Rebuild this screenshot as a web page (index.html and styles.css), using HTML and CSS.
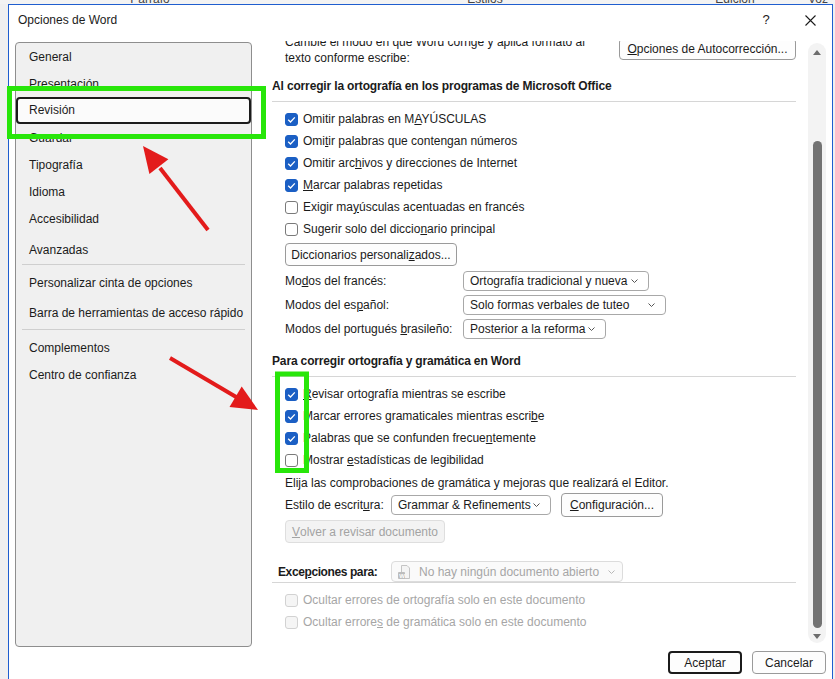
FILE: index.html
```html
<!DOCTYPE html>
<html lang="es">
<head>
    <meta charset="UTF-8">
    <title>Opciones de Word</title>
    <link rel="stylesheet" href="styles.css">
</head>
<body>
    <!-- Word ribbon behind the dialog, only its bottom edge shows -->
    <div id="ribbon">
        <span class="rb-group rb-fuente"></span>
        <span class="rb-group rb-parrafo">Párrafo</span>
        <span class="rb-group rb-estilos">Estilos</span>
        <span class="rb-group rb-edicion">Edición</span>
        <span class="rb-group rb-voz">Voz</span>
    </div>

    <div id="dialog">
        <div id="title-bar">
            <span class="title">Opciones de Word</span>
            <div class="title-buttons">
                <span class="help">?</span>
                <svg class="close" width="11" height="11" viewBox="0 0 11 11">
                    <path d="M0.5 0.5 L10.5 10.5 M10.5 0.5 L0.5 10.5" stroke="#1b1b1b" stroke-width="1.1" fill="none"/>
                </svg>
            </div>
        </div>

        <div id="main">
            <ul id="nav">
                <li>General</li>
                <li>Presentación</li>
                <li class="selected">Revisión</li>
                <li>Guardar</li>
                <li>Tipografía</li>
                <li>Idioma</li>
                <li>Accesibilidad</li>
                <li class="group-start">Avanzadas</li>
                <li class="nav-sep"></li>
                <li class="after-sep">Personalizar cinta de opciones</li>
                <li class="spaced">Barra de herramientas de acceso rápido</li>
                <li class="nav-sep sep-low"></li>
                <li class="after-sep">Complementos</li>
                <li>Centro de confianza</li>
            </ul>

            <div id="pane">
                <div class="pane-content">
                    <div class="intro">
                        <p>Cambie el modo en que Word corrige y aplica formato al<br>texto conforme escribe:</p>
                        <button class="btn btn-autocorrect"><u>O</u>pciones de Autocorrección...</button>
                    </div>

                    <h2 class="section-title">Al corregir la ortografía en los programas de Microsoft Office</h2>
                    <div class="check-list">
                        <div class="check"><span class="box on"><svg viewBox="0 0 13 13"><path d="M3.2 6.8 L5.5 9 L9.8 4.4"/></svg></span><span>Omitir palabras en M<u>A</u>YÚSCULAS</span></div>
                        <div class="check"><span class="box on"><svg viewBox="0 0 13 13"><path d="M3.2 6.8 L5.5 9 L9.8 4.4"/></svg></span><span>Omi<u>t</u>ir palabras que contengan números</span></div>
                        <div class="check"><span class="box on"><svg viewBox="0 0 13 13"><path d="M3.2 6.8 L5.5 9 L9.8 4.4"/></svg></span><span>Omitir arc<u>h</u>ivos y direcciones de Internet</span></div>
                        <div class="check"><span class="box on"><svg viewBox="0 0 13 13"><path d="M3.2 6.8 L5.5 9 L9.8 4.4"/></svg></span><span><u>M</u>arcar palabras repetidas</span></div>
                        <div class="check"><span class="box"></span><span>Exigir ma<u>y</u>úsculas acentuadas en francés</span></div>
                        <div class="check"><span class="box"></span><span>Sugerir solo del diccio<u>n</u>ario principal</span></div>
                    </div>
                    <button class="btn btn-dict">Diccionarios personali<u>z</u>ados...</button>

                    <div class="modes">
                        <div class="mode-row">
                            <span class="mode-label">Mo<u>d</u>os del francés:</span>
                            <div class="dropdown dd-fr"><span>Ortografía tradicional y nueva</span><svg class="chev" width="7" height="4" viewBox="0 0 7 4"><path d="M0.5 0.5 L3.5 3.5 L6.5 0.5"/></svg></div>
                        </div>
                        <div class="mode-row">
                            <span class="mode-label">Modos del es<u>p</u>añol:</span>
                            <div class="dropdown dd-es"><span>Solo formas verbales de tuteo</span><svg class="chev" width="7" height="4" viewBox="0 0 7 4"><path d="M0.5 0.5 L3.5 3.5 L6.5 0.5"/></svg></div>
                        </div>
                        <div class="mode-row">
                            <span class="mode-label">Modos del portugués <u>b</u>rasileño:</span>
                            <div class="dropdown dd-pt"><span>Posterior a la reforma</span><svg class="chev" width="7" height="4" viewBox="0 0 7 4"><path d="M0.5 0.5 L3.5 3.5 L6.5 0.5"/></svg></div>
                        </div>
                    </div>

                    <h2 class="section-title second">Para corregir ortografía y gramática en Word</h2>
                    <div class="check-list">
                        <div class="check"><span class="box on"><svg viewBox="0 0 13 13"><path d="M3.2 6.8 L5.5 9 L9.8 4.4"/></svg></span><span><u>R</u>evisar ortografía mientras se escribe</span></div>
                        <div class="check"><span class="box on"><svg viewBox="0 0 13 13"><path d="M3.2 6.8 L5.5 9 L9.8 4.4"/></svg></span><span>Marcar errores gramaticales mientras escri<u>b</u>e</span></div>
                        <div class="check"><span class="box on"><svg viewBox="0 0 13 13"><path d="M3.2 6.8 L5.5 9 L9.8 4.4"/></svg></span><span>Palabras que se confunden frecue<u>n</u>temente</span></div>
                        <div class="check"><span class="box"></span><span>Mostrar <u>e</u>stadísticas de legibilidad</span></div>
                    </div>
                    <p class="note">Elija las comprobaciones de gramática y mejoras que realizará el Editor.</p>
                    <div class="style-row">
                        <span class="style-label">Estilo de escrit<u>u</u>ra:</span>
                        <div class="dropdown dd-style"><span>Grammar &amp; Refinements</span><svg class="chev" width="7" height="4" viewBox="0 0 7 4"><path d="M0.5 0.5 L3.5 3.5 L6.5 0.5"/></svg></div>
                        <button class="btn btn-config"><u>C</u>onfiguración...</button>
                    </div>
                    <button class="btn btn-recheck" disabled><u>V</u>olver a revisar documento</button>

                    <div class="exceptions">
                        <span class="exc-label">Exce<u>p</u>ciones para:</span>
                        <div class="dropdown dd-doc disabled">
                            <svg class="doc-icon" width="12" height="14" viewBox="0 0 12 14">
                                <path d="M3.5 0.5 H9 L11.5 3 V13.5 H3.5 Z" fill="#f4f4f4" stroke="#c4c4c4"/>
                                <rect x="0" y="7" width="7" height="7" rx="1" fill="#bdbdbd"/>
                                <text x="1.2" y="12.6" font-size="6" font-family="Liberation Sans" font-weight="bold" fill="#fff">W</text>
                            </svg>
                            <span>No hay ningún documento abierto</span>
                            <svg class="chev" width="7" height="4" viewBox="0 0 7 4"><path d="M0.5 0.5 L3.5 3.5 L6.5 0.5"/></svg>
                        </div>
                    </div>
                    <div class="check-list disabled-list">
                        <div class="check"><span class="box"></span><span>Ocultar errores de ortografía solo en este documento</span></div>
                        <div class="check"><span class="box"></span><span>Ocultar errore<u>s</u> de gramática solo en este documento</span></div>
                    </div>
                </div>
            </div>

            <div id="scrollbar">
                <span class="sb-up"></span>
                <span class="sb-thumb"></span>
                <span class="sb-down"></span>
            </div>
        </div>

        <div id="footer">
            <button class="btn btn-ok">Aceptar</button>
            <button class="btn btn-cancel">Cancelar</button>
        </div>
    </div>

    <!-- Annotations drawn on top of the screenshot -->
    <svg id="marks" width="835" height="679" viewBox="0 0 835 679">
        <rect x="9.5" y="88.5" width="254" height="48" fill="none" stroke="#28e60a" stroke-width="5"/>
        <rect x="277.5" y="374" width="29" height="96.5" fill="none" stroke="#28e60a" stroke-width="5"/>
        <line x1="208" y1="230" x2="160" y2="168" stroke="#e31b1b" stroke-width="4"/>
        <polygon points="143,146 168.4,159.3 149.4,173.9" fill="#e31b1b"/>
        <line x1="170" y1="358" x2="237" y2="397.5" stroke="#e31b1b" stroke-width="4"/>
        <polygon points="258,410 229.5,407.1 241.7,386.5" fill="#e31b1b"/>
    </svg>
</body>
</html>
```
FILE: styles.css
```css
/* Base */
* { margin: 0; padding: 0; box-sizing: border-box; }
body {
    width: 835px;
    height: 679px;
    overflow: hidden;
    position: relative;
    background-color: #f0f0f0;
    color: #1b1b1b;
    font-family: "Liberation Sans", Arial, sans-serif;
    font-size: 12px;
    line-height: 16px;
}
u { text-decoration: underline; text-underline-offset: 1px; }

/* Ribbon strip behind the dialog */
#ribbon { display: flex; height: 4px; overflow: hidden; background-color: #f3f3f3; color: #444; }
.rb-group { flex: none; margin-top: -9px; line-height: 16px; text-align: center; }
.rb-fuente { width: 12px; }
.rb-parrafo { width: 276px; }
.rb-estilos { width: 394px; }
.rb-edicion { width: 106px; }
.rb-voz { width: 60px; }

/* Dialog frame */
#dialog {
    width: 825px;
    height: 700px;
    margin-left: 8px;
    border: 1px solid #1f5ecf;
    border-bottom: none;
    background-color: #fff;
}
#title-bar { display: flex; justify-content: space-between; height: 36px; padding: 7px 16px 0 9px; }
.title-buttons { display: flex; align-items: flex-start; }
.help { width: 16px; text-align: center; font-size: 13px; }
.close { margin: 3px 0 0 31px; }

#main { display: flex; height: 606px; padding-left: 6px; }

/* Left navigation */
#nav {
    flex: none;
    width: 237px;
    height: 605px;
    margin-top: 1px;
    list-style: none;
    border: 1px solid #8e8e8e;
    border-radius: 4px;
    background-color: #f0f0f0;
}
#nav li { height: 27px; line-height: 28px; padding-left: 13px; white-space: nowrap; }
#nav li.selected { border: 2px solid #1b1b1b; border-radius: 4px; background-color: #fbfbfb; line-height: 23px; padding-left: 11px; }
#nav li.group-start { margin-top: 4px; }
#nav li.nav-sep { height: 1px; margin: 1px 6px 0 6px; padding: 0; background-color: #cfcfcf; }
#nav li.sep-low { margin-top: 3px; }
#nav li.after-sep { margin-top: 4px; }
#nav li.spaced { margin-top: 3px; }

/* Right pane (scrolled) */
#pane { flex: none; width: 524px; height: 604px; margin-left: 20px; overflow: hidden; }
.pane-content { margin-top: -7px; }

.intro { display: flex; justify-content: space-between; padding-left: 13px; }
.section-title {
    margin-top: 12px;
    padding-bottom: 7px;
    border-bottom: 1px solid #d6d6d6;
    font-size: 12px;
    font-weight: bold;
    letter-spacing: -0.15px;
    line-height: 16px;
}
.section-title.second { margin-top: 12px; }

.check-list { margin-top: 6px; }
.check { display: flex; align-items: center; gap: 5px; height: 22px; padding-left: 13px; white-space: nowrap; }
.box {
    flex: none;
    width: 13px;
    height: 13px;
    border: 1px solid #7a7a7a;
    border-radius: 3px;
    background-color: #fff;
}
.box.on { border-color: #1b5fc4; background-color: #1b5fc4; }
.box svg { display: block; width: 13px; height: 13px; margin: -1px; }
.box svg path { fill: none; stroke: #fff; stroke-width: 1.3; }

/* Buttons */
.btn {
    display: flex;
    align-items: center;
    justify-content: center;
    height: 23px;
    border: 1px solid #9a9a9a;
    border-radius: 4px;
    background-color: #fdfdfd;
    color: #1b1b1b;
    font: inherit;
    white-space: nowrap;
}
.btn-autocorrect { width: 177px; height: 22px; margin-top: 4px; }
.btn-dict { width: 172px; margin: 3px 0 0 13px; }
.btn-config { width: 102px; height: 24px; margin-left: 10px; }
.btn-recheck { width: 160px; margin: 3px 0 0 13px; border-color: #dedede; background-color: #f3f3f3; color: #a3a3a3; }

/* Drop downs */
.dropdown {
    display: flex;
    align-items: center;
    justify-content: space-between;
    height: 20px;
    padding: 0 10px 0 6px;
    border: 1px solid #a8a8a8;
    border-radius: 4px;
    background-color: #fff;
    white-space: nowrap;
}
.chev { flex: none; }
.chev path { fill: none; stroke: #555; stroke-width: 1; }
.dd-fr { width: 186px; }
.dd-es { width: 203px; }
.dd-pt { width: 143px; }
.dd-style { width: 160px; }

.modes { margin-top: 3px; }
.mode-row { display: flex; align-items: center; height: 24px; padding-left: 13px; }
.mode-label { width: 178px; white-space: nowrap; }

.note { margin-top: 4px; padding-left: 13px; }
.style-row { display: flex; align-items: center; height: 24px; margin-top: 2px; padding-left: 13px; }
.style-label { width: 106px; white-space: nowrap; }

/* Exceptions */
.exceptions {
    display: flex;
    align-items: center;
    height: 22px;
    margin-top: 18px;
    padding-left: 6px;
    border-bottom: 1px solid #d6d6d6;
}
.exc-label { width: 113px; font-weight: bold; letter-spacing: -0.4px; }
.dd-doc { width: 232px; height: 21px; justify-content: flex-start; gap: 9px; }
.dd-doc .chev { margin-left: auto; }
.dropdown.disabled { border-color: #dcdcdc; background-color: #fafafa; color: #a6a6a6; }
.dropdown.disabled .chev path { stroke: #b8b8b8; }
.doc-icon { flex: none; }

.disabled-list { margin-top: 6px; color: #a6a6a6; }
.disabled-list .box { border-color: #d2d2d2; background-color: #f5f5f5; }

/* Scroll bar */
#scrollbar {
    display: flex;
    flex-direction: column;
    align-items: center;
    flex: none;
    width: 18px;
    height: 600px;
    margin: 2px 0 0 12px;
    border-radius: 9px;
    background-color: #f3f3f3;
}
.sb-up { margin-top: 7px; border-left: 4px solid transparent; border-right: 4px solid transparent; border-bottom: 5px solid #6d6d6d; }
.sb-thumb { width: 9px; height: 487px; margin-top: 86px; border-radius: 5px; background-color: #737373; }
.sb-down { margin-top: 6px; border-left: 4px solid transparent; border-right: 4px solid transparent; border-top: 5px solid #6d6d6d; }

/* Footer */
#footer { display: flex; justify-content: flex-end; gap: 10px; padding: 4px 6px 0 0; }
.btn-ok { width: 74px; border: 2px solid #1b1b1b; }
.btn-cancel { width: 74px; }

/* Annotation layer */
#marks { position: absolute; top: 0; left: 0; pointer-events: none; }
```
